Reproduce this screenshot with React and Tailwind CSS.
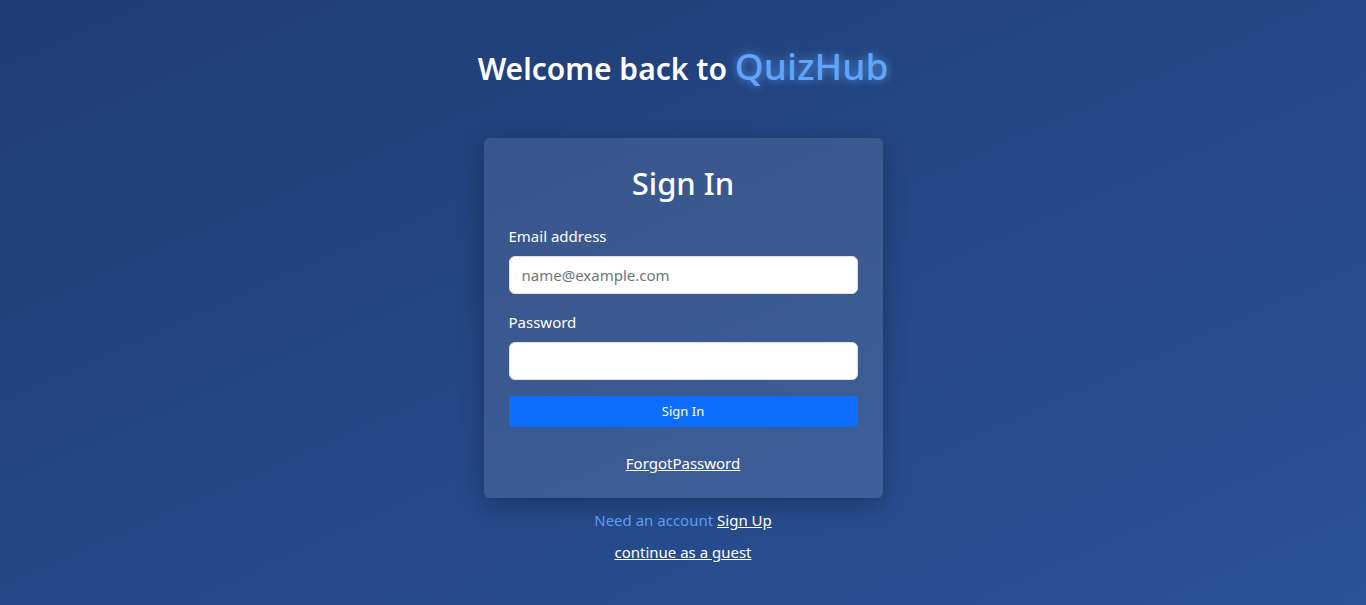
import { useState } from "react";

export default function App() {
  const [email, setEmail] = useState("");
  const [password, setPassword] = useState("");

  return (
    <div
      className="min-h-[605px] w-full bg-gradient-to-br from-[#1e3c72] to-[#2a5298] text-white flex flex-col items-center"
      style={{ fontFamily: '"Noto Sans", "Open Sans", sans-serif' }}
    >
      <h1 className="mt-[45px] h-[42px] flex items-baseline text-[30px] leading-[42px] font-semibold">
        Welcome back to&nbsp;
        <span className="text-[37px] font-medium text-[#60a5fa] [text-shadow:0_0_10px_rgba(96,165,250,0.8)]">QuizHub</span>
      </h1>

      <div className="mt-[51px] w-[399px] rounded-md bg-white/10 shadow-[0_8px_24px_rgba(0,0,0,0.25)] px-[25px] pt-[26px] pb-[23px]">
        <h2 className="text-center text-[31px] leading-[38px] font-medium mb-[22px]">Sign In</h2>
        <form onSubmit={(e) => e.preventDefault()}>
          <div className="mb-4">
            <label className="block mb-2 text-[15px] leading-6">Email address</label>
            <input
              className="block w-full h-[38px] rounded-md border border-[#dee2e6] bg-white px-3 text-[15px] text-[#212529] placeholder:text-[#6c757d] outline-none"
              type="email"
              placeholder="name@example.com"
              value={email}
              onChange={(e) => setEmail(e.target.value)}
            />
          </div>
          <div className="mb-4">
            <label className="block mb-2 text-[15px] leading-6">Password</label>
            <input
              className="block w-full h-[38px] rounded-md border border-[#dee2e6] bg-white px-3 text-[15px] text-[#212529] outline-none"
              type="password"
              value={password}
              onChange={(e) => setPassword(e.target.value)}
            />
          </div>
          <button
            type="submit"
            className="block w-full h-[31px] rounded bg-[#0d6efd] text-[13px] leading-[21px] text-white"
          >
            Sign In
          </button>
        </form>
        <div className="mt-6 text-center">
          <a href="#" className="text-[15px] leading-6 underline text-white">ForgotPassword</a>
        </div>
      </div>

      <div className="mt-[10px] text-[15px] leading-6 text-[#5b9cf2]">
        Need an account{" "}
        <a href="#" className="underline text-white">Sign Up</a>
      </div>
      <div className="mt-2 text-[15px] leading-6">
        <a href="#" className="underline text-white">continue as a guest</a>
      </div>
    </div>
  );
}
